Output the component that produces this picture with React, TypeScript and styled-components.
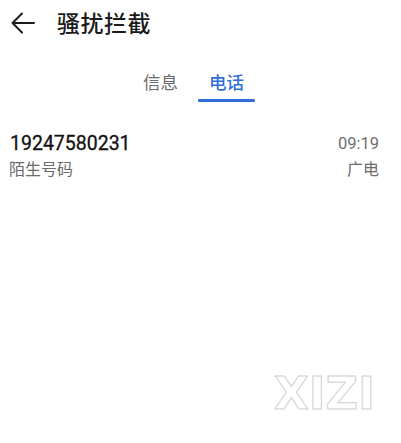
import styled, { createGlobalStyle } from "styled-components";

const GlobalStyle = createGlobalStyle`
  html, body {
    margin: 0;
    padding: 0;
    background: #fff;
  }
  body {
    font-family: Roboto, "Noto Sans CJK SC", sans-serif;
  }
`;

const Page = styled.div`
  position: relative;
  width: 401px;
  height: 443px;
  background: #fff;
  overflow: hidden;
`;

const Header = styled.div`
  display: flex;
  align-items: center;
  height: 44px;
  padding-left: 11px;
  gap: 22px;
`;

const BackButton = styled.div`
  display: flex;
  width: 24px;
  height: 24px;
  margin-top: 1px;
`;

const Title = styled.h1`
  margin: 0;
  font-size: 23px;
  font-weight: 500;
  color: #1b1b1b;
  letter-spacing: 0.5px;
`;

const Tabs = styled.div`
  display: flex;
  justify-content: center;
  gap: 20px;
  margin-top: 27px;
  padding-right: 14px;
`;

const Tab = styled.div<{ $active?: boolean }>`
  width: 46px;
  display: flex;
  flex-direction: column;
  align-items: center;
  font-size: 17.5px;
  font-weight: ${(p) => (p.$active ? 500 : 400)};
  color: ${(p) => (p.$active ? "#2f6fd7" : "#6b6b6b")};
  line-height: 24px;
  &::after {
    content: "";
    display: block;
    width: 57px;
    height: 2.5px;
    margin-top: 4px;
    border-radius: 1px;
    background: ${(p) => (p.$active ? "#2f6fd7" : "transparent")};
  }
`;

const Row = styled.div`
  display: flex;
  justify-content: space-between;
  padding: 30px 22px 0 9px;
`;

const Col = styled.div<{ $right?: boolean }>`
  display: flex;
  flex-direction: column;
  align-items: ${(p) => (p.$right ? "flex-end" : "flex-start")};
  gap: 3px;
`;

const Number = styled.div`
  font-size: 19.5px;
  font-weight: 400;
  color: #111;
  line-height: 24px;
  padding-left: 1px;
  -webkit-text-stroke: 0.3px #111;
`;

const Time = styled.div`
  font-size: 16.5px;
  color: #707070;
  line-height: 24px;
`;

const Sub = styled.div`
  font-size: 16px;
  color: #6b6b6b;
  line-height: 22px;
`;

const Watermark = styled.div`
  position: absolute;
  left: 274px;
  top: 366px;
  font-family: "DejaVu Sans", sans-serif;
  font-size: 45px;
  font-weight: bold;
  letter-spacing: 0px;
  color: #fff;
  -webkit-text-stroke: 1px #d0d0d0;
  line-height: 56px;
`;

export default function App() {
  return (
    <Page>
      <GlobalStyle />
      <Header>
        <BackButton>
          <svg width="24" height="24" viewBox="0 0 24 24" fill="none">
            <path
              d="M23 12H1.5M11 2.5L1.5 12l9.5 9.5"
              stroke="#1b1b1b"
              strokeWidth="2"
              strokeLinecap="round"
              strokeLinejoin="round"
            />
          </svg>
        </BackButton>
        <Title>骚扰拦截</Title>
      </Header>
      <Tabs>
        <Tab>信息</Tab>
        <Tab $active>电话</Tab>
      </Tabs>
      <Row>
        <Col>
          <Number>19247580231</Number>
          <Sub>陌生号码</Sub>
        </Col>
        <Col $right>
          <Time>09:19</Time>
          <Sub>广电</Sub>
        </Col>
      </Row>
      <Watermark>XIZI</Watermark>
    </Page>
  );
}
